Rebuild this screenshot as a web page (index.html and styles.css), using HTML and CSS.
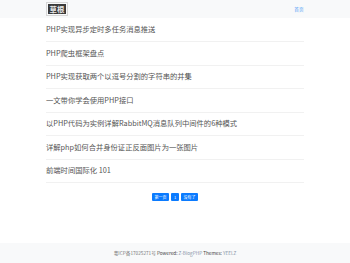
FILE: index.html
```html
<!DOCTYPE html>
<html lang="zh-CN">
<head>
    <meta charset="UTF-8">
    <meta name="viewport" content="width=device-width, initial-scale=1.0">
    <title>草根</title>
    <link rel="stylesheet" href="styles.css">
</head>
<body>
    <header class="site-header">
        <div class="container header-inner">
            <a class="logo" href="#"><span>草根</span></a>
            <a class="nav-link" href="#">首页</a>
        </div>
    </header>

    <main class="container">
        <ul class="post-list">
            <li><a href="#">PHP实现异步定时多任务消息推送</a></li>
            <li><a href="#">PHP爬虫框架盘点</a></li>
            <li><a href="#">PHP实现获取两个以逗号分割的字符串的并集</a></li>
            <li><a href="#">一文带你学会使用PHP接口</a></li>
            <li><a href="#">以PHP代码为实例详解RabbitMQ消息队列中间件的6种模式</a></li>
            <li><a href="#">详解php如何合并身份证正反面图片为一张图片</a></li>
            <li><a href="#">前端时间国际化 101</a></li>
        </ul>

        <nav class="pager">
            <a href="#">第一页</a>
            <a href="#">1</a>
            <a href="#">没有了</a>
        </nav>
    </main>

    <footer class="site-footer">
        <span>粤ICP备17025271号</span>
        <b>Powered:</b> <a href="#">Z-BlogPHP</a>
        <b>Themes:</b> <a href="#">YEELZ</a>
    </footer>
</body>
</html>
```

FILE: styles.css
```css
body {
    margin: 0;
    font-family: "Noto Sans CJK SC", "Noto Sans", sans-serif;
    color: #333;
    background: #fff;
}
a {
    color: inherit;
    text-decoration: none;
}
.container {
    width: 258px;
    margin: 0 auto;
}
.site-header {
    background: #f8f9fa;
    height: 18px;
}
.header-inner {
    display: flex;
    align-items: center;
    justify-content: space-between;
    height: 18px;
}
.logo {
    display: block;
    border: 1px solid #d6d6d6;
    padding: 1px;
    line-height: 0;
}
.logo span {
    display: inline-block;
    background: #3a3a3a;
    color: #e8e8e8;
    font-size: 7.4px;
    font-weight: bold;
    line-height: 10px;
    padding: 0 1.5px;
}
.nav-link {
    color: #4c9bf5;
    font-size: 4.6px;
    margin-right: 0.5px;
}
.post-list {
    list-style: none;
    margin: 0.5px 0 0;
    padding: 0;
}
.post-list li {
    padding: 7.5px 0 8px;
    line-height: 7px;
    font-size: 7.3px;
    border-bottom: 1px solid #f1f1f1;
}
.post-list li a {
    color: #555;
}
.pager {
    display: flex;
    justify-content: center;
    gap: 2px;
    margin: 9.5px 0 42px;
}
.pager a {
    background: #0b7bff;
    color: #fff;
    font-size: 4px;
    height: 8.6px;
    line-height: 8.6px;
    padding: 0 2.7px;
    border-radius: 1px;
}
.site-footer {
    background: #f8f9fa;
    height: 20px;
    line-height: 21px;
    text-align: center;
    font-size: 4.7px;
    color: #777;
}
.site-footer b {
    font-weight: normal;
    color: #444;
}
.site-footer a {
    color: #8793a6;
}
```
